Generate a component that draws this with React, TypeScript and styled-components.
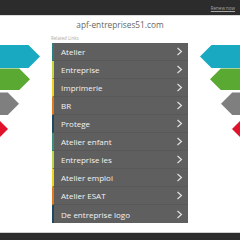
import React, { FC } from "react";
import styled, { createGlobalStyle } from "styled-components";

const GlobalStyle = createGlobalStyle`
  html, body {
    margin: 0;
    padding: 0;
    background: #ffffff;
    font-family: "Open Sans", "Liberation Sans", sans-serif;
  }
`;

const links: { label: string; accent: string }[] = [
  { label: "Atelier", accent: "#2b7f80" },
  { label: "Entreprise", accent: "#c3d63f" },
  { label: "Imprimerie", accent: "#f0d21f" },
  { label: "BR", accent: "#e07a1f" },
  { label: "Protege", accent: "#1b4a60" },
  { label: "Atelier enfant", accent: "#3a8e7a" },
  { label: "Entreprise les", accent: "#b9d448" },
  { label: "Atelier emploi", accent: "#eed21e" },
  { label: "Atelier ESAT", accent: "#e07a1f" },
  { label: "De entreprise logo", accent: "#1b4a60" },
];

// arrows on the sides: top, bottom, tip x (left side coordinates)
const arrows = [
  { top: 0, bottom: 23, tip: 40, color: "#19a9c1" },
  { top: 23.5, bottom: 45, tip: 30, color: "#5aa932" },
  { top: 47.5, bottom: 70, tip: 19, color: "#7f7f7f" },
  { top: 75, bottom: 93, tip: 8, color: "#e0122c" },
];

const Page = styled.div`
  width: 240px;
  height: 240px;
  display: flex;
  flex-direction: column;
  overflow: hidden;
`;

const TopBar = styled.header`
  height: 16px;
  background: #2c2c2c;
  border-bottom: 1px solid #dcdcdc;
  display: flex;
  align-items: flex-end;
  justify-content: flex-end;
  padding: 0 5px 4px 0;
  box-sizing: border-box;
  flex-shrink: 0;
`;

const Renew = styled.a`
  font-size: 4.5px;
  line-height: 5px;
  color: #a8a8a8;
  text-decoration: underline;
`;

const Domain = styled.h1`
  margin: 3px 0 0;
  height: 12px;
  line-height: 12px;
  text-align: center;
  font-size: 8.3px;
  font-weight: 400;
  color: #666666;
`;

const Body = styled.main`
  display: grid;
  grid-template-columns: 52px 136px 52px;
  margin-top: 4px;
`;

const Side = styled.div<{ $flip?: boolean }>`
  padding-top: 10px;
  svg {
    display: block;
    transform: ${(p) => (p.$flip ? "scaleX(-1)" : "none")};
  }
`;

const Center = styled.section`
  display: flex;
  flex-direction: column;
`;

const Label = styled.div`
  height: 8px;
  font-size: 4.5px;
  line-height: 7px;
  color: #aaaaaa;
  margin-left: -1px;
`;

const Panel = styled.ul`
  list-style: none;
  margin: 0;
  padding: 0;
  background: #5f5f5f;
`;

const Row = styled.li<{ $accent: string }>`
  height: 18px;
  box-sizing: border-box;
  border-left: 2px solid ${(p) => p.$accent};
  border-bottom: 1px solid #585858;
  display: flex;
  align-items: center;
  justify-content: space-between;
  padding: 0 5px 0 7px;
  color: #f3f3f3;
  font-size: 8px;
  font-weight: 500;
  &:last-child {
    border-bottom: none;
  }
`;

const Footer = styled.footer`
  margin-top: auto;
  height: 8px;
  background: #2c2c2c;
  border-top: 1px solid #cfcfcf;
  box-sizing: border-box;
`;

const Arrows: FC<{ flip?: boolean }> = ({ flip }) => (
  <Side $flip={flip}>
    <svg width="52" height="95" viewBox="0 0 52 95">
      {arrows.map((a) => {
        const half = (a.bottom - a.top) / 2;
        const corner = a.tip - half;
        const mid = a.top + half;
        return (
          <polygon
            key={a.color}
            fill={a.color}
            points={`0,${a.top} ${corner},${a.top} ${a.tip},${mid} ${corner},${a.bottom} 0,${a.bottom}`}
          />
        );
      })}
    </svg>
  </Side>
);

const Chevron: FC = () => (
  <svg width="7" height="9" viewBox="0 0 7 9">
    <polyline points="1.5,1 5.5,4.5 1.5,8" fill="none" stroke="#e6e6e6" strokeWidth="1.1" />
  </svg>
);

const App: FC = () => (
  <>
    <GlobalStyle />
    <Page>
      <TopBar>
        <Renew>Renew now</Renew>
      </TopBar>
      <Domain>apf-entreprises51.com</Domain>
      <Body>
        <Arrows />
        <Center>
          <Label>Related Links</Label>
          <Panel>
            {links.map((l) => (
              <Row key={l.label} $accent={l.accent}>
                <span>{l.label}</span>
                <Chevron />
              </Row>
            ))}
          </Panel>
        </Center>
        <Arrows flip />
      </Body>
      <Footer />
    </Page>
  </>
);

export default App;
